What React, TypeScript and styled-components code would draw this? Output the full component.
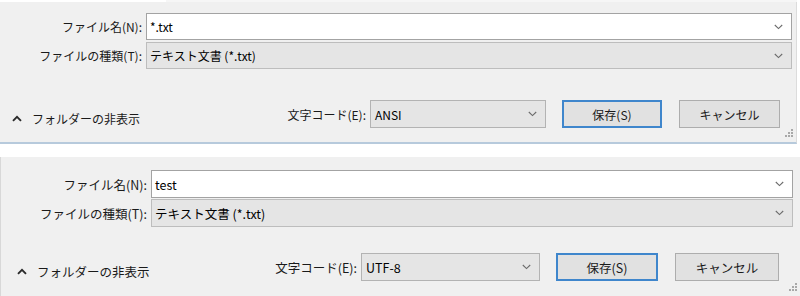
import styled, { createGlobalStyle } from 'styled-components';

const GlobalStyle = createGlobalStyle`
  html, body {
    margin: 0;
    padding: 0;
    background: #ffffff;
  }
  body {
    width: 800px;
    height: 296px;
    overflow: hidden;
    font-family: "Noto Sans CJK JP", "Noto Sans", sans-serif;
    color: #000;
  }
`;

type Metrics = {
  font: number;
  labelCol: number;
  rightPad: number;
  topPad: number;
  rowH: [number, number];
  rowGap: number;
  footGap: number;
  footH: number;
  footBottom: number;
  toggleLeft: number;
  toggleGap: number;
  selectW: number;
  saveW: number;
  cancelW: number;
  btnGap: number;
  footRight: number;
};

const Page = styled.div`
  display: flex;
  flex-direction: column;
  width: 800px;
`;

const ListEdge = styled.div`
  display: flex;
  height: 2px;
  background: #f6f6f6;
  width: 797px;

  &::before {
    content: '';
    width: 166px;
    background: #ffffff;
  }
`;

const Panel = styled.div<{ $m: Metrics; $first?: boolean }>`
  display: flex;
  flex-direction: column;
  background: #f0f0f0;
  font-size: ${({ $m }) => $m.font}px;
  padding: ${({ $m }) => $m.topPad}px ${({ $m }) => $m.rightPad}px ${({ $m }) => $m.footBottom}px 0;
  width: ${({ $first }) => ($first ? '797px' : '800px')};
  box-sizing: border-box;
  border-right: ${({ $first }) => ($first ? '1px solid #dcdcdc' : 'none')};
  border-left: ${({ $first }) => ($first ? 'none' : '1px solid #d8d8d8')};
  border-bottom: ${({ $first }) => ($first ? '2px solid #b7cadc' : 'none')};
  position: relative;
`;

const Gap = styled.div`
  height: 13px;
  background: #ffffff;
`;

const Fields = styled.div<{ $m: Metrics }>`
  display: grid;
  grid-template-columns: ${({ $m }) => $m.labelCol}px 1fr;
  grid-template-rows: ${({ $m }) => $m.rowH[0]}px ${({ $m }) => $m.rowH[1]}px;
  row-gap: ${({ $m }) => $m.rowGap}px;
  align-items: stretch;
`;

const Label = styled.label`
  display: flex;
  align-items: center;
  justify-content: flex-end;
  padding-right: 4px;
  white-space: nowrap;
  color: #1a1a1a;
`;

const Combo = styled.div<{ $editable?: boolean }>`
  display: flex;
  align-items: center;
  justify-content: space-between;
  box-sizing: border-box;
  padding: 0 8px 0 3px;
  background: ${({ $editable }) => ($editable ? '#ffffff' : '#e5e5e5')};
  border: 1px solid ${({ $editable }) => ($editable ? '#a3a3a3' : '#bdbdbd')};
  white-space: nowrap;
`;

const Footer = styled.div<{ $m: Metrics }>`
  display: flex;
  align-items: stretch;
  justify-content: space-between;
  height: ${({ $m }) => $m.footH}px;
  margin-top: ${({ $m }) => $m.footGap}px;
  padding-right: ${({ $m }) => $m.footRight}px;
`;

const Toggle = styled.div<{ $m: Metrics }>`
  display: flex;
  align-items: center;
  gap: ${({ $m }) => $m.toggleGap}px;
  padding: 8px 0 0 ${({ $m }) => $m.toggleLeft}px;
  color: #1a1a1a;
`;

const Actions = styled.div`
  display: flex;
  align-items: stretch;
`;

const EncodingLabel = styled.span`
  display: flex;
  align-items: center;
  padding-right: 4px;
  color: #1a1a1a;
`;

const Select = styled(Combo)<{ $w: number }>`
  width: ${({ $w }) => $w}px;
  padding-left: 4px;
  border-color: #b3b3b3;
`;

const Button = styled.button<{ $w: number; $default?: boolean; $gap: number }>`
  width: ${({ $w }) => $w}px;
  margin-left: ${({ $gap }) => $gap}px;
  font: inherit;
  color: #1a1a1a;
  background: #e1e1e1;
  border: ${({ $default }) => ($default ? '2px solid #3f86cc' : '1px solid #adadad')};
  padding: 0;
  box-sizing: border-box;
`;

const Grip = styled.svg`
  position: absolute;
  right: 2px;
  bottom: 4px;
`;

const Chevron = () => (
  <svg width="9" height="6" viewBox="0 0 9 6">
    <path d="M0.8 1 L4.5 4.6 L8.2 1" fill="none" stroke="#6b6b6b" strokeWidth="1.1" />
  </svg>
);

const Caret = () => (
  <svg width="10" height="7" viewBox="0 0 10 7">
    <path d="M1 5.8 L5 1.8 L9 5.8" fill="none" stroke="#2a2a2a" strokeWidth="1.9" />
  </svg>
);

const ResizeGrip = () => (
  <Grip width="10" height="10" viewBox="0 0 10 10">
    {[
      [7, 1],
      [4, 4],
      [7, 4],
      [1, 7],
      [4, 7],
      [7, 7],
    ].map(([x, y]) => (
      <rect key={`${x}-${y}`} x={x} y={y} width="2" height="2" fill="#a8a8a8" />
    ))}
  </Grip>
);

const top: Metrics = {
  font: 12,
  labelCol: 146,
  rightPad: 4,
  topPad: 11,
  rowH: [27, 27],
  rowGap: 2,
  footGap: 31,
  footH: 28,
  footBottom: 14,
  toggleLeft: 12,
  toggleGap: 10,
  selectW: 176,
  saveW: 100,
  cancelW: 101,
  btnGap: 16,
  footRight: 12,
};

const bottom: Metrics = {
  font: 12.5,
  labelCol: 150,
  rightPad: 7,
  topPad: 13,
  rowH: [28, 28],
  rowGap: 1,
  footGap: 26,
  footH: 28,
  footBottom: 15,
  toggleLeft: 16,
  toggleGap: 10,
  selectW: 179,
  saveW: 102,
  cancelW: 104,
  btnGap: 16,
  footRight: 14,
};

function SaveFooter({ m, name, encoding, first }: { m: Metrics; name: string; encoding: string; first?: boolean }) {
  return (
    <Panel $m={m} $first={first}>
      <Fields $m={m}>
        <Label>ファイル名(N):</Label>
        <Combo $editable>
          <span>{name}</span>
          <Chevron />
        </Combo>
        <Label>ファイルの種類(T):</Label>
        <Combo>
          <span>テキスト文書 (*.txt)</span>
          <Chevron />
        </Combo>
      </Fields>
      <Footer $m={m}>
        <Toggle $m={m}>
          <Caret />
          <span>フォルダーの非表示</span>
        </Toggle>
        <Actions>
          <EncodingLabel>文字コード(E):</EncodingLabel>
          <Select $w={m.selectW}>
            <span>{encoding}</span>
            <Chevron />
          </Select>
          <Button $w={m.saveW} $gap={m.btnGap} $default>
            保存(S)
          </Button>
          <Button $w={m.cancelW} $gap={m.btnGap + 1}>
            キャンセル
          </Button>
        </Actions>
      </Footer>
      <ResizeGrip />
    </Panel>
  );
}

export default function App() {
  return (
    <Page>
      <GlobalStyle />
      <ListEdge />
      <SaveFooter m={top} name="*.txt" encoding="ANSI" first />
      <Gap />
      <SaveFooter m={bottom} name="test" encoding="UTF-8" />
    </Page>
  );
}
